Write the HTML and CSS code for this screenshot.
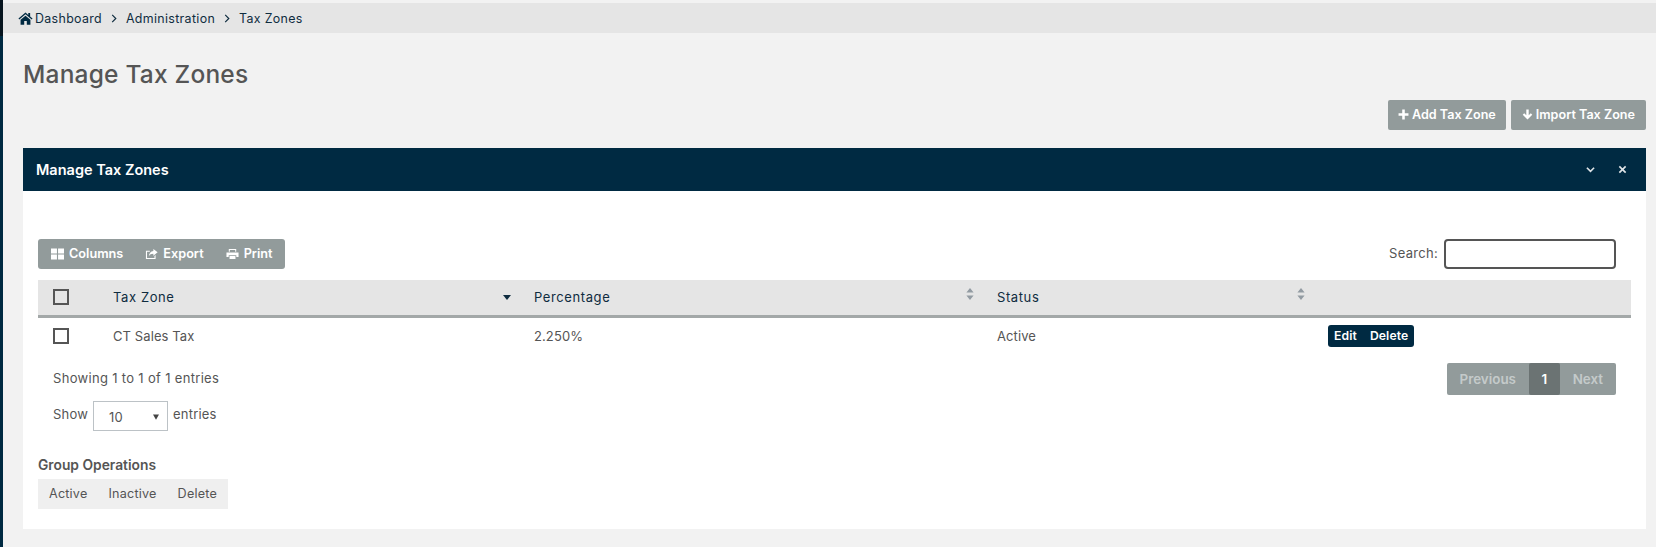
FILE: index.html
```html
<!DOCTYPE html>
<html lang="en">
<head>
<meta charset="utf-8">
<title>Manage Tax Zones</title>
<link rel="stylesheet" href="styles.css">
</head>
<body>
<div class="app">
  <aside class="rail"></aside>
  <main class="content">
    <nav class="crumbs">
      <svg class="home" viewBox="0 0 16 14"><path d="M8 0.6 0.4 7l.9 1.1L8 2.5l6.7 5.6.9-1.1-2.6-2.2V1.2h-2v2.1zM2.7 8.4V13.6h3.9V9.7h2.8v3.9h3.9V8.4L8 4z"/></svg>
      <span>Dashboard</span>
      <svg class="sep" viewBox="0 0 6 10"><path d="M1 1l4 4-4 4"/></svg>
      <span>Administration</span>
      <svg class="sep" viewBox="0 0 6 10"><path d="M1 1l4 4-4 4"/></svg>
      <span>Tax Zones</span>
    </nav>
    <h1 class="title">Manage Tax Zones</h1>
    <div class="actions">
      <button class="btn btn-add"><svg class="ic" viewBox="0 0 12 12"><path d="M4.6 0.6h2.8v4h4v2.8h-4v4H4.6v-4h-4V4.6h4z"/></svg>Add Tax Zone</button>
      <button class="btn"><svg class="ic" viewBox="0 0 12 12"><path d="M4.7 0.5h2.6v6.3l2.3-2.3 1.6 1.7L6 11.5.8 6.2l1.6-1.7 2.3 2.3z"/></svg>Import Tax Zone</button>
    </div>
    <section class="panel">
      <header class="panel-head">
        <h2>Manage Tax Zones</h2>
        <div class="panel-tools">
          <svg class="tool" viewBox="0 0 10 10"><path d="M1 3l4 4 4-4"/></svg>
          <svg class="tool" viewBox="0 0 10 10"><path d="M1.5 1.5l7 7M8.5 1.5l-7 7"/></svg>
        </div>
      </header>
      <div class="panel-body">
        <div class="toolbar">
          <div class="tbtns">
            <button class="tbtn"><svg class="ic-t" viewBox="0 0 14 12"><path d="M0 0h6.4v5.5H0zM7.6 0H14v5.5H7.6zM0 6.5h6.4V12H0zM7.6 6.5H14V12H7.6z"/></svg>Columns</button>
            <button class="tbtn"><svg class="ic-t" viewBox="0 0 14 12"><path d="M9 .5l4.6 3.7L9 8V5.8C6.5 5.8 5 6.6 4.2 8.4 4.2 5.4 6 3 9 2.7zM1 2.5h4.2v1.2H2.2v6.6h8V8.2l1.2-1v4.3H1z"/></svg>Export</button>
            <button class="tbtn"><svg class="ic-t" viewBox="0 0 14 12"><path d="M3 .5h8v3.2H9.9V1.6H4.1v2.1H3zM.5 4.4h13v4.8h-2.4V7.3H2.9v1.9H.5zM3.8 8.1h6.4v3.4H3.8z"/></svg>Print</button>
          </div>
          <label class="search"><span class="search-label">Search:</span><input class="search-input" type="text"></label>
        </div>
        <table class="grid">
          <colgroup><col class="c1"><col class="c2"><col class="c3"><col class="c4"><col class="c5"></colgroup>
          <thead>
            <tr>
              <th><span class="box"></span></th>
              <th><div class="th-in">Tax Zone<svg class="down" viewBox="0 0 8 5"><path d="M0 0h8L4 5z"/></svg></div></th>
              <th><div class="th-in">Percentage<svg class="sort" viewBox="0 0 8 12"><path d="M4 0l3.6 4.6H.4zM4 12L.4 7.4h7.2z"/></svg></div></th>
              <th><div class="th-in">Status<svg class="sort" viewBox="0 0 8 12"><path d="M4 0l3.6 4.6H.4zM4 12L.4 7.4h7.2z"/></svg></div></th>
              <th></th>
            </tr>
          </thead>
          <tbody>
            <tr>
              <td><span class="box"></span></td>
              <td>CT Sales Tax</td>
              <td>2.250%</td>
              <td>Active</td>
              <td><span class="row-btns"><a>Edit</a><a>Delete</a></span></td>
            </tr>
          </tbody>
        </table>
        <div class="footer">
          <div class="info">
            <div class="showing">Showing 1 to 1 of 1 entries</div>
            <div class="length"><span>Show</span><span class="select">10<svg class="caret" viewBox="0 0 8 7"><path d="M0 0h8L4 7z"/></svg></span><span>entries</span></div>
          </div>
          <div class="pager"><span class="pg">Previous</span><span class="pg cur">1</span><span class="pg">Next</span></div>
        </div>
        <div class="group">
          <div class="group-title">Group Operations</div>
          <div class="group-btns"><span>Active</span><span>Inactive</span><span>Delete</span></div>
        </div>
      </div>
    </section>
  </main>
</div>
</body>
</html>
```
FILE: styles.css
```css
* { box-sizing: border-box; }
html, body { margin: 0; height: 100%; }
body { font-family: Inter, "Open Sans", sans-serif; font-size: 13px; color: #555; background: #f2f2f2; overflow: hidden; }
.app { display: flex; height: 547px; }
.rail { width: 3px; flex: none; background: linear-gradient(#06141e 0, #06141e 36px, #002a42 36px); }
.content { flex: 1; min-width: 0; padding-top: 3px; }
.crumbs { height: 30px; background: #e5e5e5; display: flex; align-items: center; padding-left: 15px; color: #0f2c3f; font-size: 12.4px; letter-spacing: .34px; }
.home { width: 15px; height: 13px; margin-right: 2px; fill: #002a42; }
.sep { width: 6px; height: 9px; margin: 0 9px 0 9px; fill: none; stroke: #0f2c3f; stroke-width: 1.3; }
.title { margin: 26px 0 0 20px; height: 30px; line-height: 30px; font-size: 24.5px; font-weight: 500; color: #555; letter-spacing: .2px; }
.actions { display: flex; justify-content: flex-end; gap: 5px; padding-right: 10px; margin-top: 11px; }
.btn { height: 30px; border: 0; border-radius: 2px; background: #929b9b; color: #fff; font: 600 12.6px Inter, sans-serif; padding: 0 11px 1px; display: flex; align-items: center; gap: 3px; }
.btn-add { padding: 0 10px 1px; }
.ic { width: 11px; height: 11px; fill: #fff; }
.panel { margin: 18px 10px 0 20px; background: #fff; height: 381px; }
.panel-head { height: 43px; background: #002a42; color: #fff; display: flex; align-items: center; justify-content: space-between; padding: 0 13px 1px; }
.panel-head h2 { margin: 0; font-size: 14.5px; font-weight: 600; }
.panel-tools { display: flex; gap: 23px; padding-right: 6px; }
.tool { width: 9px; height: 9px; fill: none; stroke: #dfe4e7; stroke-width: 1.8; }
.panel-body { padding: 48px 15px 0; }
.toolbar { display: flex; justify-content: space-between; align-items: center; height: 30px; }
.tbtns { display: flex; background: #929b9b; border-radius: 3px; height: 30px; padding: 0 1px 1px 2px; }
.tbtn { border: 0; background: none; color: #fff; font: 600 12.7px Inter, sans-serif; padding: 0 11px; display: flex; align-items: center; gap: 5px; }
.ic-t { width: 13px; height: 12px; fill: #fff; }
.search { display: flex; align-items: center; gap: 6px; padding-right: 15px; font-size: 13px; letter-spacing: .3px; }
.search-label { margin-top: -2px; }
.search-input { width: 172px; height: 30px; border: 2px solid #555; border-radius: 4px; background: #fff; outline: 0; }
.grid { width: 1593px; table-layout: fixed; border-collapse: collapse; margin-top: 11px; }
.c1 { width: 60px; } .c2 { width: 421px; } .c3 { width: 463px; } .c4 { width: 331px; } .c5 { width: 318px; }
.grid th { height: 36px; padding: 0 15px; background: #e5e5e5; border-bottom: 3px solid #a3a8a8; font-weight: 400; text-align: left; color: #0f2c3f; font-size: 13px; letter-spacing: .6px; }
.grid th:first-child, .grid td:first-child { padding-left: 15px; padding-right: 0; }
.th-in { display: flex; justify-content: space-between; align-items: center; height: 33px; margin-right: -7px; }
.grid td { height: 39px; padding: 0 15px; font-size: 13px; letter-spacing: .1px; color: #555; }
.box { display: block; width: 16px; height: 16px; border: 2px solid #555; }
.down { width: 8px; height: 5px; fill: #0f2c3f; }
.sort { width: 8px; height: 12px; fill: #929ba2; margin-top: -6px; }
.row-btns { display: inline-flex; align-items: center; height: 22px; background: #002a42; border-radius: 3px; color: #fff; font-weight: 600; font-size: 12.2px; padding: 0 6px 1px; gap: 13px; }
.footer { display: flex; justify-content: space-between; padding: 8px 15px 0; }
.showing { line-height: 20px; margin-top: 5px; font-size: 13px; letter-spacing: .32px; }
.length { display: flex; align-items: flex-start; gap: 5px; margin-top: 11px; height: 32px; line-height: 30px; font-size: 13px; letter-spacing: .2px; }
.select { align-self: flex-end; display: flex; align-items: center; width: 75px; height: 30px; border: 1px solid #bcc2c6; padding: 2px 0 0 15px; font-size: 13px; }
.caret { width: 6px; height: 6px; fill: #444; margin-left: auto; margin-right: 8px; }
.pager { display: flex; height: 32px; background: #929b9b; border-radius: 2px; color: #c4caca; font-weight: 600; font-size: 13.4px; }
.pg { display: flex; align-items: center; padding: 0 13px 1px; }
.cur { background: #6b7373; color: #fff; border-radius: 2px; padding: 0 12.5px 1px; }
.group { margin-top: 24px; }
.group-title { font-weight: 600; font-size: 13.8px; line-height: 20px; }
.group-btns { display: flex; margin-top: 4px; height: 30px; width: 190px; background: #efefef; align-items: center; justify-content: space-between; padding: 0 11px 1px; font-size: 12.6px; letter-spacing: .2px; }
```
